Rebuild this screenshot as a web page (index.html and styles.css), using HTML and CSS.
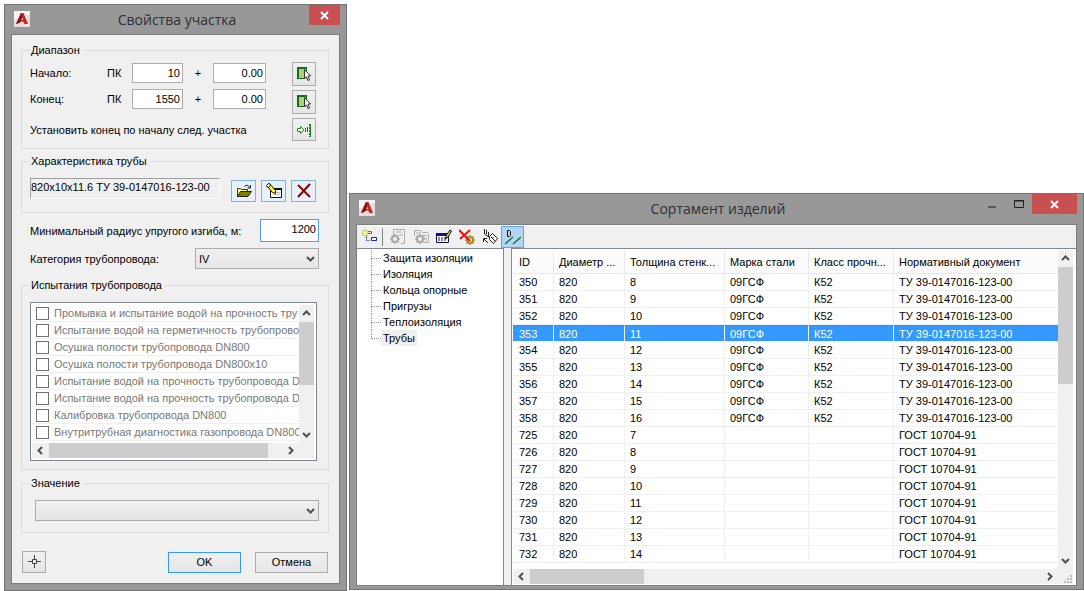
FILE: index.html
```html
<!DOCTYPE html>
<html lang="ru">
<head>
<meta charset="utf-8">
<title>Свойства участка</title>
<link rel="stylesheet" href="styles.css">
</head>
<body>
<svg class="defs" aria-hidden="true">
  <defs>
    <symbol id="logo" viewBox="0 0 16 16">
      <rect width="16" height="16" fill="#e6dede"/>
      <path d="M0 9L16 3V0H0z" fill="#f6f4f4"/>
      <path d="M7 2h2.500L14 13h-3.500L9 10.500H7L5 12l-3 1z" fill="#c4242a"/>
      <path d="M7 2L2 13l3-1 2-1.500L8.500 5z" fill="#8d1217"/>
      <path d="M7.500 9l.800-2.500L9.200 9z" fill="#f4e4e4"/>
    </symbol>
    <symbol id="up" viewBox="0 0 9 9"><path d="M1 6l3.500-3.500L8 6" fill="none" stroke="#505050" stroke-width="2"/></symbol>
    <symbol id="down" viewBox="0 0 9 9"><path d="M1 3l3.500 3.500L8 3" fill="none" stroke="#505050" stroke-width="2"/></symbol>
    <symbol id="left" viewBox="0 0 9 9"><path d="M6 1L2.500 4.500L6 8" fill="none" stroke="#505050" stroke-width="2"/></symbol>
    <symbol id="right" viewBox="0 0 9 9"><path d="M3 1l3.500 3.500L3 8" fill="none" stroke="#505050" stroke-width="2"/></symbol>
    <symbol id="cross" viewBox="0 0 9 9"><path d="M1 1l7 7M8 1L1 8" fill="none" stroke="#fff" stroke-width="2"/></symbol>
    <symbol id="pick" viewBox="0 0 16 16">
      <path d="M2 2h9v11H2z" fill="#b4cc84"/>
      <path d="M1 1h10v2H3v9h5v1H1z" fill="#107010"/>
      <path d="M10 1h1v5h-1z" fill="#107010"/>
      <path d="M8.500 3.500v9l2-1.500 1.500 3.500 1.500-.500-1.500-4h2.500z" fill="#fff" stroke="#222" stroke-width=".9"/>
    </symbol>
    <symbol id="gear" viewBox="0 0 10 10">
      <circle cx="5" cy="5" r="3" fill="none" stroke="currentColor" stroke-width="2"/>
      <path d="M5 0v2M5 8v2M0 5h2M8 5h2M1.500 1.500l1.500 1.500M7 7l1.500 1.500M8.500 1.500L7 3M3 7L1.500 8.500" stroke="currentColor" stroke-width="1.500"/>
    </symbol>
  </defs>
</svg>

<main class="desktop">
  <section class="window props">
    <header class="titlebar">
      <svg class="logo"><use href="#logo"/></svg>
      <h1 class="title">Свойства участка</h1>
      <div class="controls"><button class="close" aria-label="Закрыть"><svg class="glyph"><use href="#cross"/></svg></button></div>
    </header>
    <form class="client form">
      <fieldset class="group">
        <legend>Диапазон</legend>
        <div class="range">
          <div class="range-rows">
            <div class="range-row">
              <label for="startpk">Начало:</label><span>ПК</span>
              <input class="field" id="startpk" value="10"><span class="plus">+</span>
              <input class="field" aria-label="Начало, плюс" value="0.00">
            </div>
            <div class="range-row">
              <label for="endpk">Конец:</label><span>ПК</span>
              <input class="field" id="endpk" value="1550"><span class="plus">+</span>
              <input class="field" aria-label="Конец, плюс" value="0.00">
            </div>
            <p class="hint">Установить конец по началу след. участка</p>
          </div>
          <div class="range-buttons">
            <button type="button" class="icon-button" aria-label="Указать начало"><svg class="icon"><use href="#pick"/></svg></button>
            <button type="button" class="icon-button" aria-label="Указать конец"><svg class="icon"><use href="#pick"/></svg></button>
            <button type="button" class="icon-button short" aria-label="Установить конец"><svg class="icon" viewBox="0 0 16 16">
              <path d="M1.500 6.500h3v-2L8 8l-3.500 3.500v-2h-3z" fill="#fff" stroke="#1c901c"/>
              <path d="M9.500 6v4M11.500 5v5" stroke="#555"/><path d="M14 2v13" stroke="#1c7c1c" stroke-width="2" stroke-dasharray="2 1"/><path d="M14.500 2v13" stroke="#1c7c1c"/></svg></button>
          </div>
        </div>
      </fieldset>

      <fieldset class="group">
        <legend>Характеристика трубы</legend>
        <div class="pipe">
          <input class="sunken" aria-label="Характеристика трубы" readonly value="820x10x11.6 ТУ 39-0147016-123-00">
          <button type="button" class="icon-button blue" aria-label="Открыть"><svg class="icon" viewBox="0 0 16 16">
            <path d="M1.500 13.500v-8h3l1 1h6v3" fill="#ffff66" stroke="#333"/>
            <path d="M1.500 13.500l3-5h11l-3.500 5z" fill="#808000" stroke="#222"/>
            <path d="M8.500 3.500q3-3 5 1M14.500 2v3h-3" fill="none" stroke="#222"/></svg></button>
          <button type="button" class="icon-button blue" aria-label="Изменить"><svg class="icon" viewBox="0 0 16 16">
            <path d="M4.500 5.500h11v9h-11z" fill="#fff" stroke="#111"/><path d="M4 5h12v2H4z" fill="#111"/>
            <path d="M7 9.500h7M7 11.500h7" stroke="#bbb"/>
            <path d="M3.500.500l6 7v3l-3-1-5-6z" fill="#ffff33" stroke="#111"/><path d="M.500 2.500l2-2h1l1 2-2 2h-1z" fill="#fff" stroke="#111"/></svg></button>
          <button type="button" class="icon-button blue" aria-label="Удалить"><svg class="icon" viewBox="0 0 16 16">
            <path d="M2 2l11 11 1 1" stroke="#8c0000" stroke-width="2"/><path d="M14 1L2 14" stroke="#8c0000" stroke-width="2"/></svg></button>
        </div>
      </fieldset>

      <div class="line">
        <label for="radius">Минимальный радиус упругого изгиба, м:</label>
        <input class="field focus" id="radius" value="1200">
      </div>
      <div class="line">
        <label for="category">Категория трубопровода:</label>
        <div class="combo category"><select id="category"><option>IV</option></select><svg class="glyph"><use href="#down"/></svg></div>
      </div>

      <fieldset class="group tests">
        <legend>Испытания трубопровода</legend>
        <div class="listbox">
          <div class="items">
            <label><input type="checkbox">Промывка и испытание водой на прочность тру</label>
            <label><input type="checkbox">Испытание водой на герметичность трубопрово</label>
            <label><input type="checkbox">Осушка полости трубопровода DN800</label>
            <label><input type="checkbox">Осушка полости трубопровода DN800x10</label>
            <label><input type="checkbox">Испытание водой на прочность трубопровода D</label>
            <label><input type="checkbox">Испытание водой на прочность трубопровода D</label>
            <label><input type="checkbox">Калибровка трубопровода DN800</label>
            <label><input type="checkbox">Внутритрубная диагностика газопровода DN800</label>
          </div>
          <div class="vscroll"><svg class="glyph"><use href="#up"/></svg><i class="thumb list-v"></i><svg class="glyph end"><use href="#down"/></svg></div>
          <div class="hscroll"><svg class="glyph"><use href="#left"/></svg><i class="thumb list-h"></i><svg class="glyph end"><use href="#right"/></svg></div>
          <div class="corner"></div>
        </div>
      </fieldset>

      <fieldset class="group value">
        <legend>Значение</legend>
        <div class="combo"><select aria-label="Значение"><option></option></select><svg class="glyph"><use href="#down"/></svg></div>
      </fieldset>

      <footer class="actions">
        <button type="button" class="icon-button" aria-label="Указать точку"><svg class="icon" viewBox="0 0 16 16">
          <path d="M6.500 5.500h4v4h-4zM8.500 1v4M8.500 10v4M2 7.500h4M11 7.500h4" fill="none" stroke="#444"/></svg></button>
        <button type="button" class="push default">OK</button>
        <button type="button" class="push">Отмена</button>
      </footer>
    </form>
  </section>

  <section class="window catalog">
    <header class="titlebar">
      <svg class="logo"><use href="#logo"/></svg>
      <h2 class="title">Сортамент изделий</h2>
      <div class="controls">
        <button class="control" aria-label="Свернуть"><svg class="caption" viewBox="0 0 12 12"><path d="M2 9h8" stroke="#555" stroke-width="2"/></svg></button>
        <button class="control" aria-label="Развернуть"><svg class="caption" viewBox="0 0 12 12"><path d="M1.500 2.500h9v7h-9zM1 3h10" fill="none" stroke="#222"/></svg></button>
        <button class="close" aria-label="Закрыть"><svg class="glyph"><use href="#cross"/></svg></button>
      </div>
    </header>
    <div class="client browser">
      <nav class="toolbar">
        <button class="tool" aria-label="Создать"><svg class="icon" viewBox="0 0 16 16">
          <path d="M4 0v9M0 4h8M1 1l6 6M7 1L1 7" stroke="#d8c820"/><path d="M3 3h2v2H3z" fill="#fff"/>
          <path d="M7.500 2.500h3v2h-3M5.500 7.500v4h3" fill="none" stroke="#1820d8" stroke-dasharray="2 1"/>
          <path d="M10.500 8.500h5v3h-5z" fill="#fff" stroke="#1820d8"/></svg></button>
        <span class="separator"></span>
        <button class="tool gray" aria-label="Документ"><svg class="icon" viewBox="0 0 16 16">
          <path d="M3.500 6V.500h11v14H11M6 3h6M9 6h4" fill="none" stroke="#aaa"/><use href="#gear" x="0" y="5" width="10" height="10"/></svg></button>
        <button class="tool gray" aria-label="Копировать"><svg class="icon" viewBox="0 0 16 16">
          <path d="M1.500 7V1.500h6l2 2h5l1 2v8H11M3 4h5M8.500 6.500h5M11 9h3M12 11h2" fill="none" stroke="#aaa"/><use href="#gear" x="2" y="5" width="10" height="10"/></svg></button>
        <button class="tool" aria-label="Изменить таблицу"><svg class="icon" viewBox="0 0 16 16">
          <path d="M.500 4.500h12v9H.500z" fill="#fff" stroke="#101050"/><path d="M0 4h13v3H0z" fill="#101080"/>
          <path d="M2 9h9M2 11h9" stroke="#101050" stroke-dasharray="2 1"/>
          <path d="M9.500 10l1-4 3.500-5 1.500 1-3.500 6z" fill="#e8e040" stroke="#111"/></svg></button>
        <button class="tool gold" aria-label="Удалить"><svg class="icon" viewBox="0 0 16 16">
          <use href="#gear" x="6" y="6" width="10" height="10"/><path d="M0 1l11 11M11 1L1 10" stroke="#e81010" stroke-width="2"/></svg></button>
        <button class="tool" aria-label="Заменить"><svg class="icon" viewBox="0 0 16 16">
          <path d="M2.500 0v5l4 3V3M4.500 1v4" fill="none" stroke="#222"/>
          <path d="M7.500 7.500l3-3 5 5-4 5-4-4zM9 8l4 4" fill="#fff" stroke="#222"/><path d="M10 9l2-1" stroke="#a66"/>
          <path d="M6 14L2 10M1.500 13v-3.500H5" fill="none" stroke="#222"/></svg></button>
        <button class="tool active" aria-label="Диаметр"><svg class="icon" viewBox="0 0 16 16">
          <path d="M2.500 1.500h2l1 1v4l-1 1h-2z" fill="none" stroke="#111"/>
          <path d="M0 15L8 8M8 15L16 8" stroke="#0c7c3c" stroke-width="1.500"/></svg></button>
      </nav>
      <div class="split">
        <ul class="tree">
          <li><a href="#">Защита изоляции</a></li>
          <li><a href="#">Изоляция</a></li>
          <li><a href="#">Кольца опорные</a></li>
          <li><a href="#">Пригрузы</a></li>
          <li><a href="#">Теплоизоляция</a></li>
          <li><a href="#" class="current">Трубы</a></li>
        </ul>
        <div class="grid-panel">
          <div class="table-area">
            <table>
              <colgroup><col class="c-id"><col class="c-dia"><col class="c-wall"><col class="c-steel"><col class="c-class"><col></colgroup>
              <thead><tr><th>ID</th><th>Диаметр ...</th><th>Толщина стенк...</th><th>Марка стали</th><th>Класс прочн...</th><th>Нормативный документ</th></tr></thead>
              <tbody>
                <tr><td>350</td><td>820</td><td>8</td><td>09ГСФ</td><td>К52</td><td>ТУ 39-0147016-123-00</td></tr>
                <tr><td>351</td><td>820</td><td>9</td><td>09ГСФ</td><td>К52</td><td>ТУ 39-0147016-123-00</td></tr>
                <tr><td>352</td><td>820</td><td>10</td><td>09ГСФ</td><td>К52</td><td>ТУ 39-0147016-123-00</td></tr>
                <tr class="selected"><td>353</td><td>820</td><td>11</td><td>09ГСФ</td><td>К52</td><td>ТУ 39-0147016-123-00</td></tr>
                <tr><td>354</td><td>820</td><td>12</td><td>09ГСФ</td><td>К52</td><td>ТУ 39-0147016-123-00</td></tr>
                <tr><td>355</td><td>820</td><td>13</td><td>09ГСФ</td><td>К52</td><td>ТУ 39-0147016-123-00</td></tr>
                <tr><td>356</td><td>820</td><td>14</td><td>09ГСФ</td><td>К52</td><td>ТУ 39-0147016-123-00</td></tr>
                <tr><td>357</td><td>820</td><td>15</td><td>09ГСФ</td><td>К52</td><td>ТУ 39-0147016-123-00</td></tr>
                <tr><td>358</td><td>820</td><td>16</td><td>09ГСФ</td><td>К52</td><td>ТУ 39-0147016-123-00</td></tr>
                <tr><td>725</td><td>820</td><td>7</td><td></td><td></td><td>ГОСТ 10704-91</td></tr>
                <tr><td>726</td><td>820</td><td>8</td><td></td><td></td><td>ГОСТ 10704-91</td></tr>
                <tr><td>727</td><td>820</td><td>9</td><td></td><td></td><td>ГОСТ 10704-91</td></tr>
                <tr><td>728</td><td>820</td><td>10</td><td></td><td></td><td>ГОСТ 10704-91</td></tr>
                <tr><td>729</td><td>820</td><td>11</td><td></td><td></td><td>ГОСТ 10704-91</td></tr>
                <tr><td>730</td><td>820</td><td>12</td><td></td><td></td><td>ГОСТ 10704-91</td></tr>
                <tr><td>731</td><td>820</td><td>13</td><td></td><td></td><td>ГОСТ 10704-91</td></tr>
                <tr><td>732</td><td>820</td><td>14</td><td></td><td></td><td>ГОСТ 10704-91</td></tr>
              </tbody>
            </table>
          </div>
          <div class="vscroll"><svg class="glyph"><use href="#up"/></svg><i class="thumb table-v"></i><svg class="glyph end"><use href="#down"/></svg></div>
          <div class="hscroll"><svg class="glyph"><use href="#left"/></svg><i class="thumb table-h"></i><svg class="glyph end"><use href="#right"/></svg></div>
          <div class="corner"><svg class="grip" viewBox="0 0 9 9"><path d="M6 0h2v2H6zM3 3h2v2H3zM6 3h2v2H6zM0 6h2v2H0zM3 6h2v2H3zM6 6h2v2H6z" fill="#bbb"/></svg></div>
        </div>
      </div>
    </div>
  </section>
</main>
</body>
</html>
```
FILE: styles.css
```css
* { box-sizing: border-box; }

body {
  margin: 0;
  background: #fff;
  color: #000;
  font: 11px/14px "Liberation Sans", Arial, sans-serif;
}

button, input, select { font: inherit; color: inherit; margin: 0; }
button { padding: 0; display: flex; align-items: center; justify-content: center; }
.defs { position: absolute; width: 0; height: 0; }

.desktop {
  display: flex;
  gap: 2px;
  padding: 4px 0 0 4px;
  min-height: 100vh;
}

/* Windows */
.window {
  display: flex;
  flex-direction: column;
  background: #989898;
  border: 1px solid #747474;
  padding: 0 6px 6px;
}
.props { flex: 0 0 343px; }
.catalog { flex: 1; min-width: 0; margin: 189px 0 1px; padding-bottom: 3px; }

.titlebar {
  display: grid;
  grid-template-columns: 1fr auto 1fr;
  height: 29px;
  padding-left: 3px;
}
.catalog .titlebar { height: 30px; }
.logo { width: 16px; height: 16px; margin-top: 6px; }
.title {
  margin: 0;
  color: #303030;
  font: 14px/30px "Open Sans", "Noto Sans", sans-serif;
}
.controls { display: flex; justify-content: flex-end; align-items: flex-start; }
.close { width: 31px; height: 20px; border: 0; background: #c85050; }
.catalog .close { width: 45px; }
.control { width: 27px; height: 20px; border: 0; background: none; }
.caption { width: 12px; height: 12px; }
.glyph { width: 9px; height: 9px; flex: none; }

.client {
  flex: 1;
  border: 1px solid #7c7c7c;
  background: #f0f0f0;
}

/* Properties form */
.form { padding: 8px 10px 9px 9px; }
.group {
  min-width: 0;
  margin: 0 0 5px;
  padding: 5px 12px 7px 8px;
  border: 1px solid #dcdcdc;
}
.group legend { padding: 0 3px 0 1px; height: 14px; }
.range { display: flex; justify-content: space-between; }
.range-rows { display: grid; gap: 6px; align-content: start; padding-top: 1px; }
.range-row {
  display: grid;
  grid-template-columns: 77px 25px 51px 30px 53px;
  align-items: center;
}
.plus { text-align: center; }
.hint { margin: 8px 0 0; }
.range-buttons { display: grid; gap: 4px; }

.field {
  width: 100%;
  height: 20px;
  padding: 0 2px;
  border: 1px solid #abadb3;
  background: #fff;
  text-align: right;
  outline: 0;
}
.field.focus { width: 59px; height: 23px; padding-bottom: 3px; border-color: #569de5; }

.icon-button {
  width: 24px;
  height: 24px;
  border: 1px solid #acacac;
  background: linear-gradient(#f0f0f0, #e5e5e5);
}
.icon-button.short { height: 23px; }
.icon-button.blue { width: 25px; height: 22px; border-color: #7eb4ea; background: #e6f1fb; }
.icon { width: 16px; height: 16px; flex: none; }

.pipe {
  display: grid;
  grid-template-columns: 1fr 25px 25px 25px;
  gap: 5px;
  align-items: end;
  padding: 5px 0 3px;
}
.sunken {
  min-width: 0;
  height: 21px;
  margin: 0 6px 3px 0;
  padding: 0 0 3px;
  border: 1px solid;
  border-color: #a0a0a0 #fff #fff #a0a0a0;
  background: #f0f0f0;
  outline: 0;
}

.line {
  display: flex;
  justify-content: space-between;
  align-items: center;
  margin: 6px 10px 6px 9px;
}

.combo { position: relative; }
.combo select {
  display: block;
  width: 100%;
  height: 21px;
  padding: 0 3px;
  border: 1px solid #acacac;
  border-radius: 0;
  background: linear-gradient(#f0f0f0, #e5e5e5);
  appearance: none;
}
.combo .glyph { position: absolute; right: 4px; top: 6px; pointer-events: none; }
.combo.category { width: 124px; }

.tests { margin: 9px 0 6px; padding: 10px 11px 8px 8px; }
.listbox {
  display: grid;
  grid-template: 138px 15px / minmax(0, 1fr) 15px;
  padding: 2px 2px 2px 1px;
  border: 1px solid #828790;
  background: #fff;
}
.items { overflow: hidden; color: #787878; }
.items label {
  display: flex;
  align-items: center;
  gap: 5px;
  height: 17px;
  padding-left: 4px;
  border-bottom: 1px solid #f0f0f0;
  white-space: nowrap;
}
.items input {
  flex: none;
  width: 13px;
  height: 13px;
  border: 1px solid #707070;
  background: #fff;
  appearance: none;
}

.vscroll, .hscroll { display: flex; align-items: center; background: #f0f0f0; }
.vscroll { flex-direction: column; padding: 4px 0; }
.hscroll { padding: 0 4px; }
.end { margin: auto 0 0; }
.hscroll .end { margin: 0 0 0 auto; }
.thumb { background: #cdcdcd; }
.vscroll .thumb { width: 15px; margin-top: 4px; }
.hscroll .thumb { height: 15px; margin-left: 4px; }
.list-v { height: 63px; }
.list-h { width: 219px; }
.table-v { height: 117px; }
.table-h { width: 114px; }
.corner { display: flex; align-items: flex-end; justify-content: flex-end; background: #f0f0f0; }
.grip { width: 9px; height: 9px; }

.value { padding: 10px 9px 11px 8px; }
.value .combo { margin-left: 5px; }
.actions { display: flex; align-items: center; margin-top: 18px; padding-right: 1px; }
.actions .icon-button { height: 22px; margin: 0 auto 0 1px; }
.push {
  width: 73px;
  height: 21px;
  margin-left: 14px;
  border: 1px solid #acacac;
  background: linear-gradient(#f0f0f0, #e5e5e5);
}
.push.default { border-color: #3399ff; }

/* Catalog */
.browser { display: flex; flex-direction: column; }
.toolbar { display: flex; align-items: center; height: 23px; border-top: 1px solid #fff; }
.tool { width: 23px; height: 22px; border: 0; background: none; }
.tool.gray { color: #aaa; }
.tool.gold { color: #a89020; }
.tool.active { border: 1px solid #60a5e8; background: #b5d6f3; }
.separator { width: 1px; height: 18px; margin: 0 3px 0 2px; background: #888; }
.split {
  flex: 1;
  display: grid;
  grid-template-columns: 147px minmax(0, 1fr);
  gap: 7px;
}
.tree {
  margin: 0;
  padding: 1px 0 0 14px;
  list-style: none;
  border: 1px solid #828790;
  border-width: 1px 1px 0 0;
  background: #fff;
}
.tree li {
  position: relative;
  height: 16px;
  padding-left: 10px;
  display: flex;
  align-items: center;
}
.tree li::before {
  content: "";
  position: absolute;
  left: 0;
  top: 0;
  width: 9px;
  height: 8px;
  border: 1px dotted #999;
  border-width: 0 0 1px 1px;
}
.tree li:not(:last-child)::after {
  content: "";
  position: absolute;
  left: 0;
  top: 8px;
  height: 8px;
  border-left: 1px dotted #999;
}
.tree a { padding: 1px 2px; color: #000; text-decoration: none; }
.tree .current { background: #f0f0f0; }

.grid-panel {
  display: grid;
  grid-template: minmax(317px, 1fr) 15px / minmax(0, 1fr) 15px;
  padding: 1px 3px 1px 1px;
  border: 1px solid #828790;
  border-width: 1px 0 0 1px;
  background: #fff;
}
.table-area { overflow: hidden; }
table { width: 100%; table-layout: fixed; border-collapse: separate; border-spacing: 0; }
.c-id { width: 41px; }
.c-dia { width: 71px; }
.c-wall { width: 100px; }
.c-steel { width: 84px; }
.c-class { width: 85px; }
th, td {
  padding: 0 0 0 5px;
  border-right: 1px solid #f0f0f0;
  border-bottom: 1px solid #f0f0f0;
  text-align: left;
  font-weight: 400;
  white-space: nowrap;
}
th:first-child, td:first-child { padding-left: 6px; }
th { height: 24px; background: #fcfcfc; border-color: #e3e8f5; }
td { height: 17px; }
th:last-child, td:last-child { border-right: 0; }
.selected td {
  border-top: 1px dotted #c06a20;
  background: #3399ff;
  color: #fff;
}
```
